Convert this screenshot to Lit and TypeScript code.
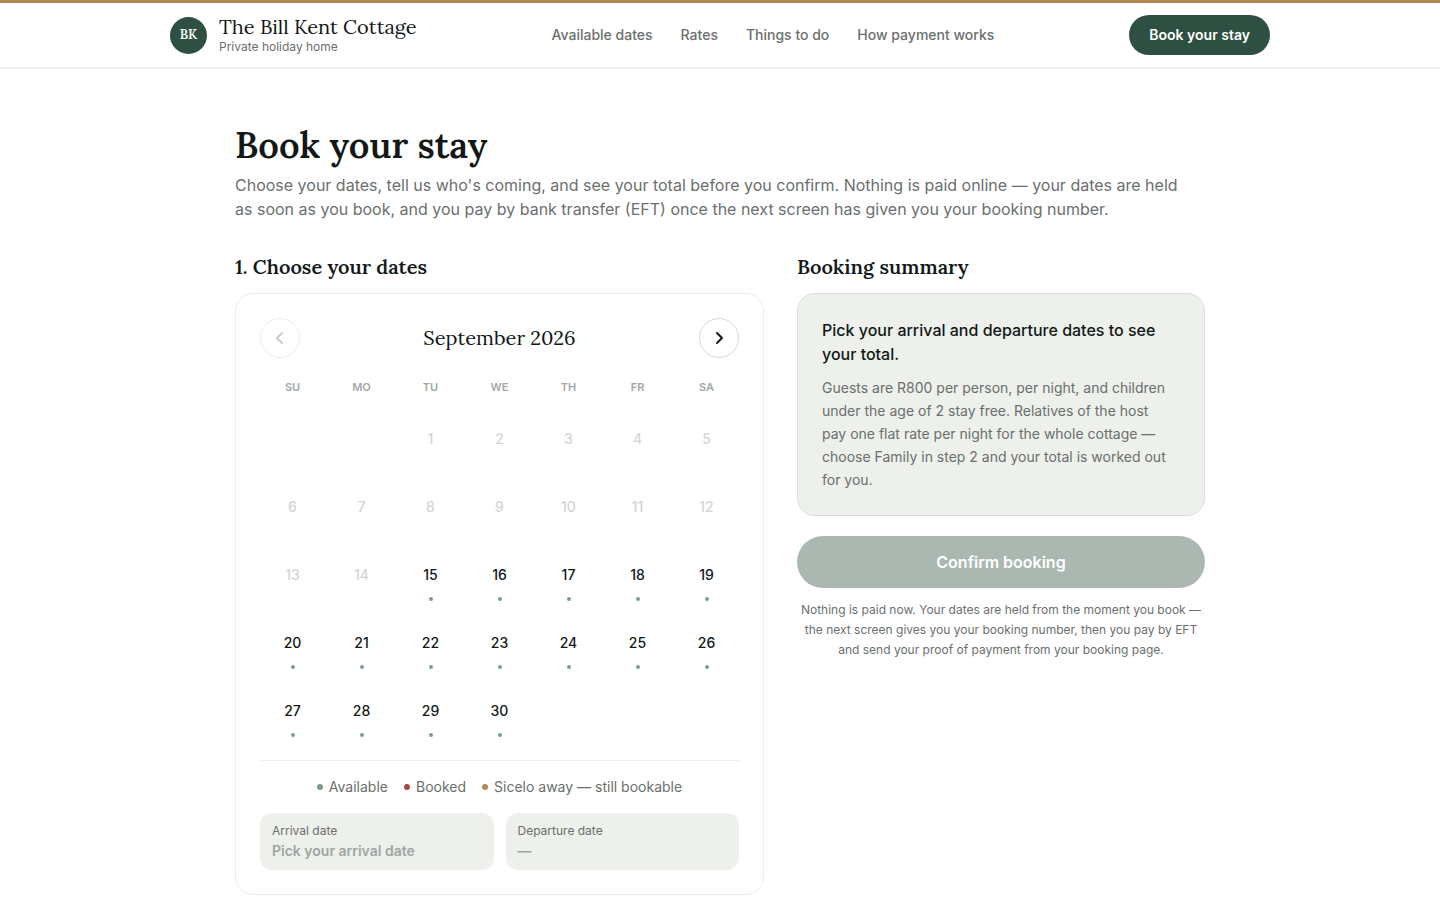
import { LitElement, html, css } from "lit";
import { customElement } from "lit/decorators.js";

const WEEKDAYS = ["SU", "MO", "TU", "WE", "TH", "FR", "SA"];
const DAYS_IN_MONTH = 30;
const FIRST_OPEN_DAY = 15;

@customElement("booking-calendar")
export class BookingCalendar extends LitElement {
  static styles = css`
    :host {
      display: block;
      border: 1px solid #ebedeb;
      border-radius: 18px;
      padding: 24px;
      background: #fff;
    }
    .month-bar {
      display: flex;
      align-items: center;
      justify-content: space-between;
      height: 40px;
    }
    .month {
      margin: 0;
      font-family: "Lora", "Liberation Serif", serif;
      font-size: 20px;
      line-height: 28px;
      font-weight: 400;
      color: #111817;
    }
    .step {
      display: grid;
      place-items: center;
      width: 40px;
      height: 40px;
      padding: 0;
      border: 1px solid #d5d8d6;
      border-radius: 50%;
      background: #fff;
      color: #111817;
    }
    .step:disabled {
      border-color: #ebecec;
      color: #c8caca;
    }
    .weekdays,
    .days {
      display: grid;
      grid-template-columns: repeat(7, 1fr);
      gap: 4px;
      text-align: center;
    }
    .weekdays {
      margin-top: 20px;
      font-size: 11px;
      line-height: 18px;
      font-weight: 600;
      color: #a3a8a6;
    }
    .days {
      margin-top: 11px;
      padding-bottom: 17px;
      border-bottom: 1px solid #efefee;
      grid-auto-rows: 64px;
    }
    .day {
      position: relative;
      border: 0;
      padding: 0;
      background: none;
      font: inherit;
      font-size: 14px;
      font-weight: 500;
      color: #111817;
    }
    .day:disabled {
      color: #d3d5d4;
    }
    .mark {
      position: absolute;
      bottom: 6px;
      left: 50%;
      width: 4px;
      height: 4px;
      margin-left: -2px;
      border-radius: 50%;
      background: #7d9c91;
    }
    .first {
      grid-column-start: 3;
    }
    .legend {
      display: flex;
      flex-wrap: wrap;
      justify-content: center;
      gap: 16px;
      margin: 16px 0;
      padding: 0;
      list-style: none;
      font-size: 14px;
      line-height: 20px;
      color: #6b6f6e;
    }
    .key {
      display: flex;
      align-items: center;
      gap: 6px;
    }
    .dot {
      width: 6px;
      height: 6px;
      border-radius: 50%;
    }
    .available {
      background: #7d9c91;
    }
    .booked {
      background: #a34a45;
    }
    .away {
      background: #b08a52;
    }
    .picked {
      display: grid;
      grid-template-columns: 1fr 1fr;
      gap: 12px;
      margin: 0;
    }
    .field {
      padding: 8px 12px 9px;
      border-radius: 12px;
      background: #edf0eb;
    }
    .name {
      font-size: 12px;
      line-height: 20px;
      color: #6b6f6e;
    }
    .value {
      margin: 0;
      font-size: 14px;
      line-height: 20px;
      font-weight: 600;
      color: #a0a6a3;
    }
  `;

  render() {
    const days = Array.from({ length: DAYS_IN_MONTH }, (_, i) => i + 1);
    return html`
      <div class="month-bar">
        <button class="step" type="button" aria-label="Previous month" disabled>
          <svg width="16" height="16" viewBox="0 0 16 16" fill="none" stroke="currentColor" stroke-width="1.900" stroke-linecap="round" stroke-linejoin="round"><path d="M10 3 5 8 10 13" /></svg>
        </button>
        <h3 class="month">September 2026</h3>
        <button class="step" type="button" aria-label="Next month">
          <svg width="16" height="16" viewBox="0 0 16 16" fill="none" stroke="currentColor" stroke-width="1.900" stroke-linecap="round" stroke-linejoin="round"><path d="M6 3 11 8 6 13" /></svg>
        </button>
      </div>
      <div class="weekdays">${WEEKDAYS.map((d) => html`<span>${d}</span>`)}</div>
      <div class="days">
        ${days.map(
          (d) => html`<button class="day ${d === 1 ? "first" : ""}" type="button" ?disabled=${d < FIRST_OPEN_DAY}>${d}${d >= FIRST_OPEN_DAY ? html`<span class="mark"></span>` : ""}</button>`
        )}
      </div>
      <ul class="legend">
        <li class="key"><span class="dot available"></span>Available</li>
        <li class="key"><span class="dot booked"></span>Booked</li>
        <li class="key"><span class="dot away"></span>Sicelo away — still bookable</li>
      </ul>
      <dl class="picked">
        <div class="field"><dt class="name">Arrival date</dt><dd class="value">Pick your arrival date</dd></div>
        <div class="field"><dt class="name">Departure date</dt><dd class="value">—</dd></div>
      </dl>
    `;
  }
}

@customElement("app-root")
export class AppRoot extends LitElement {
  static styles = css`
    :host {
      display: block;
      min-height: 100vh;
      box-sizing: border-box;
      background: #fff;
      border-top: 3px solid #b08a52;
      font-family: "Inter", sans-serif;
      font-size: 16px;
      line-height: 24px;
      color: #111817;
    }
    .header {
      border-bottom: 2px solid #f0f0ef;
    }
    .bar {
      display: flex;
      justify-content: space-between;
      align-items: center;
      max-width: 1100px;
      margin: 0 auto;
      padding: 12px 24px;
    }
    .brand {
      display: flex;
      align-items: center;
      gap: 12px;
      color: inherit;
      text-decoration: none;
    }
    .badge {
      display: grid;
      place-items: center;
      width: 37px;
      height: 37px;
      border-radius: 50%;
      background: #2e5042;
      color: #fff;
      font-family: "Lora", "Liberation Serif", serif;
      font-size: 13px;
      font-weight: 600;
    }
    .title {
      display: block;
      font-family: "Lora", "Liberation Serif", serif;
      font-size: 20px;
      line-height: 24px;
    }
    .tagline {
      display: block;
      font-size: 12px;
      line-height: 16px;
      color: #6b6f6e;
    }
    .nav {
      display: flex;
      gap: 28px;
    }
    .link {
      font-size: 14px;
      font-weight: 500;
      color: #6b6f6e;
      text-decoration: none;
    }
    .cta {
      padding: 8px 20px;
      border-radius: 20px;
      background: #2e5042;
      color: #fff;
      font-size: 14px;
      font-weight: 600;
      text-decoration: none;
    }
    .main {
      max-width: 970px;
      margin: 0 auto;
      padding: 52px 24px 0;
    }
    .heading {
      margin: 0;
      font-family: "Lora", "Liberation Serif", serif;
      font-size: 36px;
      line-height: 48px;
      font-weight: 600;
    }
    .intro {
      max-width: 960px;
      margin: 4px 0 0;
      color: #6b6f6e;
    }
    .columns {
      display: grid;
      grid-template-columns: 529fr 408fr;
      gap: 33px;
      margin-top: 32px;
      align-items: start;
    }
    .section {
      margin: 0 0 12px;
      font-family: "Lora", "Liberation Serif", serif;
      font-size: 20px;
      line-height: 28px;
      font-weight: 600;
    }
    .summary {
      padding: 24px;
      border: 1px solid #d9dfda;
      border-radius: 18px;
      background: #edf0eb;
    }
    .prompt {
      margin: 0;
      font-weight: 500;
    }
    .detail {
      max-width: 350px;
      margin: 10px 0 0;
      font-size: 14px;
      line-height: 23px;
      color: #6b6f6e;
    }
    .confirm {
      display: block;
      width: 100%;
      margin-top: 20px;
      padding: 14px;
      border: 0;
      border-radius: 26px;
      background: #abb8b1;
      color: #fff;
      font: inherit;
      font-weight: 600;
    }
    .note {
      margin: 12px 0 0;
      font-size: 12px;
      line-height: 20px;
      text-align: center;
      color: #6b6f6e;
    }
  `;

  render() {
    return html`
      <header class="header">
        <div class="bar">
          <a class="brand" href="#">
            <span class="badge">BK</span>
            <span><span class="title">The Bill Kent Cottage</span><span class="tagline">Private holiday home</span></span>
          </a>
          <nav class="nav">
            ${["Available dates", "Rates", "Things to do", "How payment works"].map((t) => html`<a class="link" href="#">${t}</a>`)}
          </nav>
          <a class="cta" href="#">Book your stay</a>
        </div>
      </header>
      <main class="main">
        <h1 class="heading">Book your stay</h1>
        <p class="intro">Choose your dates, tell us who's coming, and see your total before you confirm. Nothing is paid online — your dates are held as soon as you book, and you pay by bank transfer (EFT) once the next screen has given you your booking number.</p>
        <div class="columns">
          <section>
            <h2 class="section">1. Choose your dates</h2>
            <booking-calendar></booking-calendar>
          </section>
          <section>
            <h2 class="section">Booking summary</h2>
            <div class="summary">
              <p class="prompt">Pick your arrival and departure dates to see your total.</p>
              <p class="detail">Guests are R800 per person, per night, and children under the age of 2 stay free. Relatives of the host pay one flat rate per night for the whole cottage — choose Family in step 2 and your total is worked out for you.</p>
            </div>
            <button class="confirm" type="button" disabled>Confirm booking</button>
            <p class="note">Nothing is paid now. Your dates are held from the moment you book — the next screen gives you your booking number, then you pay by EFT and send your proof of payment from your booking page.</p>
          </section>
        </div>
      </main>
    `;
  }
}
